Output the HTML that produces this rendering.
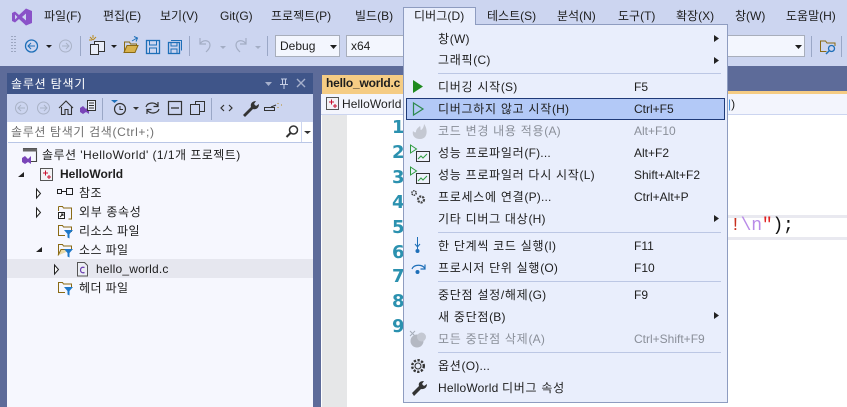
<!DOCTYPE html>
<html><head><meta charset="utf-8">
<style>
html,body{margin:0;padding:0;width:847px;height:407px;overflow:hidden;background:#5d6b99}
*{box-sizing:border-box}
body{font-family:"Liberation Sans","Noto Sans CJK KR",sans-serif;font-size:12px;color:#1e1e1e;position:relative}
.a{position:absolute;white-space:nowrap}
.t{position:absolute;white-space:nowrap;line-height:16px;height:16px}
svg{position:absolute;overflow:visible}
.m{top:8px}
.i{left:438px;letter-spacing:.72px}
.i em{font-style:normal;letter-spacing:.2px}
.k{left:634px}
.g{color:#8a8f99}
.s{position:absolute;left:438px;width:283px;height:1px;background:#bcc7e4}
.n{position:absolute;color:#2b91af;font:bold 18px "DejaVu Sans",sans-serif;line-height:20px;left:392px}
</style></head><body>
<div class="a" style="left:0;top:0;width:847px;height:66px;background:#ccd5f0"></div>

<!-- logo -->
<svg style="left:12px;top:8px" width="20" height="18" viewBox="0 0 20 18"><path d="M0 5 L3 3.5 L7 7 L14 0.5 L20 3 V15 L14 17.5 L7 11 L3 14.5 L0 13Z M3 6.5 V11.5 L5.5 9Z M14 5.5 L10 9 L14 12.5Z" fill="#8a52c8" fill-rule="evenodd"/></svg>

<div class="t m" style="left:44px">파일(F)</div>
<div class="t m" style="left:103px">편집(E)</div>
<div class="t m" style="left:160px">보기(V)</div>
<div class="t m" style="left:220px">Git(G)</div>
<div class="t m" style="left:271px">프로젝트(P)</div>
<div class="t m" style="left:355px">빌드(B)</div>
<div class="t m" style="left:487px">테스트(S)</div>
<div class="t m" style="left:557px">분석(N)</div>
<div class="t m" style="left:618px">도구(T)</div>
<div class="t m" style="left:676px">확장(X)</div>
<div class="t m" style="left:735px">창(W)</div>
<div class="t m" style="left:786px">도움말(H)</div>

<!-- toolbar -->
<svg style="left:0;top:33px" width="330" height="33" fill="none">
 <path d="M12 3v18M15 3v18" stroke="#6c7690" stroke-width="1" stroke-dasharray="1 2"/>
 <circle cx="31.500" cy="13" r="6" stroke="#1e6fb8" stroke-width="1.300"/><path d="M35 13h-7M31 10l-3 3 3 3" stroke="#1e6fb8"/>
 <path d="M46 12h6l-3 3z" fill="#1e1e1e"/>
 <circle cx="65.500" cy="13" r="6" stroke="#a9b2c6"/><path d="M62 13h7M66 10l3 3-3 3" stroke="#a9b2c6"/>
 <path d="M80.500 3v20" stroke="#9aa7c6"/>
 <path d="M90 4l3 3M96 4l-3 3M93 2v3M89 7h3" stroke="#b98a1e"/>
 <rect x="94.500" y="8.500" width="10" height="10" fill="#e9edf8" stroke="#333"/><rect x="90.500" y="11.500" width="8" height="10" fill="#e9edf8" stroke="#333"/>
 <path d="M111 12h6l-3 3z" fill="#1e1e1e"/>
 <path d="M124.500 19v-10h5l1 2h6v2" stroke="#8a6a14"/><path d="M124 19.500l3-7h11l-3 7z" fill="#d8b24e" stroke="#8a6a14"/><path d="M132 8l5-3M134 3.500l3.500 1.500-1.500 3.500" stroke="#1e6fb8"/>
 <rect x="146.500" y="7.500" width="13" height="13" stroke="#1e6fb8" stroke-width="1.300"/><path d="M149.500 8v4h7v-4M149.500 20v-5h7v5" stroke="#1e6fb8"/>
 <rect x="168.500" y="9.500" width="11" height="11" stroke="#1e6fb8" stroke-width="1.300"/><path d="M171 7.500h10.500v10" stroke="#1e6fb8"/><path d="M171 10v3h6v-3M171 20v-4h6v4" stroke="#1e6fb8"/>
 <path d="M189.500 3v20" stroke="#9aa7c6"/>
 <path d="M200 5v6h6M200 11c3-5 10-4 10 1 0 3-2 5-4 7" stroke="#a3adc4" stroke-width="1.200"/>
 <path d="M220 13h6l-3 3z" fill="#a3adc4"/>
 <path d="M246 5v6h-6M246 11c-3-5-10-4-10 1 0 3 2 5 4 7" stroke="#a3adc4" stroke-width="1.200"/>
 <path d="M255 13h6l-3 3z" fill="#a3adc4"/>
 <path d="M267.500 3v20" stroke="#9aa7c6"/>
</svg>
<div class="a" style="left:275px;top:35px;width:65px;height:22px;background:#f3f6fe;border:1px solid #a8aebb;line-height:20px;padding-left:4px">Debug</div>
<svg style="left:330px;top:45px" width="8" height="4"><path d="M0 0h7l-3.500 4z" fill="#1e1e1e"/></svg>
<div class="a" style="left:346px;top:35px;width:60px;height:22px;background:#f3f6fe;border:1px solid #a8aebb;line-height:20px;padding-left:4px">x64</div>
<div class="a" style="left:700px;top:35px;width:105px;height:22px;background:#f3f6fe;border:1px solid #a8aebb"></div>
<svg style="left:795px;top:45px" width="8" height="4"><path d="M0 0h7l-3.500 4z" fill="#1e1e1e"/></svg>
<svg style="left:810px;top:33px" width="37" height="33" fill="none">
 <path d="M1.500 3v21" stroke="#9aa7c6"/>
 <path d="M10.500 19v-11h5l1.500 2h8v3M10.500 18.500h6" stroke="#8a6a14"/><circle cx="21.500" cy="15.500" r="3" stroke="#1e6fb8" stroke-width="1.300"/><path d="M19 18l-3 3" stroke="#1e6fb8" stroke-width="1.500"/>
 <path d="M31.500 3v21" stroke="#9aa7c6"/>
</svg>

<!-- solution explorer -->
<div class="a" style="left:7px;top:73px;width:306px;height:21px;background:#3f5589"></div>
<div class="t" style="left:11px;top:76px;color:#fff;letter-spacing:.8px">솔루션 탐색기</div>
<svg style="left:262px;top:78px" width="50" height="12" fill="none">
 <path d="M3 4h7l-3.500 4z" fill="#a6b0cc"/>
 <path d="M19 1h6M20.500 1v5M23.500 1v5M18 6.500h8M22 7v4" stroke="#c6cfe6"/>
 <path d="M35 1l8 8M43 1l-8 8" stroke="#a6b0cc" stroke-width="1.400"/>
</svg>
<div class="a" style="left:7px;top:94px;width:306px;height:28px;background:#ccd5f0"></div>
<svg style="left:7px;top:94px" width="306" height="28" fill="none">
 <circle cx="14.500" cy="14" r="6" stroke="#a9b2c6"/><path d="M18 14h-7M14 11l-3 3 3 3" stroke="#a9b2c6"/>
 <circle cx="36.500" cy="14" r="6" stroke="#a9b2c6"/><path d="M33 14h7M37 11l3 3-3 3" stroke="#a9b2c6"/>
 <path d="M52 14l7-7 7 7M54.500 13v7.500h3.500v-5h3v5h3.500v-7.500" stroke="#333" stroke-width="1.100"/>
 <path d="M73 14l3-2 3 3 3-3v8l-3-2-3 2-3-2z" fill="#7a45b8"/>
 <rect x="80.500" y="6.500" width="8" height="10" fill="#e9edf8" stroke="#333"/><path d="M82 9h5M82 11.500h5M82 14h5" stroke="#333"/>
 <path d="M95.500 4v22" stroke="#9aa7c6"/>
 <path d="M104 6h7l-3.500 3z" fill="#1e6fb8"/>
 <circle cx="113" cy="15" r="5.500" stroke="#333" stroke-width="1.200"/><path d="M113 12v3.500h3" stroke="#333"/>
 <path d="M126 13h6l-3 3z" fill="#333"/>
 <path d="M139 13c1-4 8-6 12-1M151 8v4.500h-4.500M152 15c-1 4-8 6-12 1M140 20v-4.500h4.500" stroke="#333" stroke-width="1.200"/>
 <rect x="161.500" y="7.500" width="13" height="13" stroke="#333" stroke-width="1.200"/><path d="M164 14h8" stroke="#333" stroke-width="1.300"/>
 <rect x="188.500" y="7.500" width="9" height="10" stroke="#333"/><rect x="183.500" y="10.500" width="9" height="10" fill="#ccd5f0" stroke="#333"/>
 <path d="M204.500 4v22" stroke="#9aa7c6"/>
 <path d="M217 11l-3 3 3 3M222 11l3 3-3 3" stroke="#333" stroke-width="1.200"/>
 <path d="M236 21l8-8c-1-3 1-6 5-6l-2 3 2 2 3-2c0 4-3 6-6 5l-8 8z" fill="#333"/>
 <path d="M257.500 13.500h10v3h-10z" stroke="#333"/><path d="M264 13l5-2" stroke="#333"/><path d="M271 9v1M274 11h1M271 13v1" stroke="#b98a1e"/>
</svg>
<div class="a" style="left:7px;top:122px;width:306px;height:285px;background:#f6f7fe"></div>
<div class="a" style="left:8px;top:122px;width:304px;height:21px;background:#fff;border-bottom:1px solid #b9c6e6"></div>
<div class="t" style="left:11px;top:124px;color:#707070;letter-spacing:.65px">솔루션 탐색기 검색(Ctrl+;)</div>
<svg style="left:284px;top:124px" width="28" height="18" fill="none"><circle cx="9.500" cy="6" r="4" stroke="#333" stroke-width="1.500"/><path d="M6.500 9l-4 4" stroke="#333" stroke-width="2"/><path d="M17.500 -2v20" stroke="#ccd5f0"/><path d="M20 7h7l-3.500 3z" fill="#333"/></svg>

<div class="a" style="left:7px;top:259px;width:306px;height:19px;background:#e6e7ef"></div>
<div class="t" style="left:42px;top:147px;letter-spacing:.45px">솔루션 'HelloWorld' (1/1개 프로젝트)</div>
<div class="t" style="left:60px;top:166px;font-weight:bold">HelloWorld</div>
<div class="t" style="left:79px;top:185px;letter-spacing:.5px">참조</div>
<div class="t" style="left:79px;top:204px;letter-spacing:.65px">외부 종속성</div>
<div class="t" style="left:79px;top:223px;letter-spacing:.4px">리소스 파일</div>
<div class="t" style="left:79px;top:242px;letter-spacing:.4px">소스 파일</div>
<div class="t" style="left:96px;top:261px;letter-spacing:.2px">hello_world.c</div>
<div class="t" style="left:79px;top:280px;letter-spacing:.4px">헤더 파일</div>
<svg style="left:0;top:143px" width="110" height="160" fill="none">
 <path d="M23.500 8.500v-3h13v13h-6" stroke="#444" stroke-width="1.100"/><path d="M23 5.500h14v3h-14z" fill="#666"/>
 <path d="M22 15l3-2 3 3 3-3v8l-3-2-3 2-3-2z" fill="#7a45b8"/>
 <path d="M18 34l6-5v5z" fill="#222"/>
 <rect x="40.500" y="25.500" width="12" height="12" fill="#f3f3f6" stroke="#555"/><path d="M43 30h5M45.500 27.500v5M47 34h4M49 32v4" stroke="#c8102e"/>
 <path d="M36.500 46v9l4-4.500z" stroke="#222" fill="#fff"/>
 <path d="M36.500 65v9l4-4.500z" stroke="#222" fill="#fff"/>
 <path d="M36 109l6-5v5z" fill="#222"/>
 <path d="M54.500 122v9l4-4.500z" stroke="#222" fill="#fff"/>
 <rect x="57.500" y="46.500" width="4" height="4" stroke="#222"/><rect x="66.500" y="45.500" width="6" height="6" stroke="#222"/><path d="M62 48.500h4.500" stroke="#222"/>
 <path d="M62 63.500h-3.500v-0h4l1 1.500h8v11h-3" stroke="#8a6a14"/><path d="M58.500 68v-4.500" stroke="#8a6a14"/><rect x="58.500" y="69.500" width="6" height="6" fill="#fff" stroke="#222"/><path d="M60 74l3-3M61 71h2v2" stroke="#222"/>
 <path d="M58.500 93v-10.500h4l1 1.500h8v5" stroke="#8a6a14"/><path d="M58 92.500h7" stroke="#8a6a14"/><path d="M64 87h9l-3.500 4v4.500l-2-1V91z" fill="#1e78c8"/>
 <path d="M58.500 112v-10.500h4l1 1.500h8v3" stroke="#8a6a14"/><path d="M58 112.500l3-6h11" stroke="#8a6a14" fill="#e8d9a8"/><path d="M64 106h9l-3.500 4v4.500l-2-1V110z" fill="#1e78c8"/>
 <path d="M58.500 150v-10.500h4l1 1.500h8v3" stroke="#8a6a14"/><path d="M58 149.500h7" stroke="#8a6a14"/><path d="M64 144h9l-3.500 4v4.500l-2-1V148z" fill="#1e78c8"/>
 <path d="M77.500 119.500h7l3 3v10.500h-10z" fill="#eceef4" stroke="#555"/><path d="M84.500 124.500c-3-1-4 1-4 2.500s1 3.500 4 2.500" stroke="#6b3fb0" stroke-width="1.200"/>
</svg>

<!-- document -->
<div class="a" style="left:322px;top:75px;width:82px;height:17px;background:#f5cc84;color:#1e1e1e;font-weight:bold;line-height:16px;padding-left:4px;letter-spacing:-.2px">hello_world.c</div>
<div class="a" style="left:322px;top:91px;width:525px;height:3px;background:#f5cc84"></div>
<div class="a" style="left:321px;top:94px;width:526px;height:21px;background:#f3f5fd;border-bottom:1px solid #ccd5f0"></div>
<div class="a" style="left:321px;top:115px;width:526px;height:292px;background:#fff"></div>
<div class="a" style="left:322px;top:115px;width:25px;height:292px;background:#e6e7e8"></div>
<svg style="left:326px;top:97px" width="14" height="14" fill="none"><rect x=".5" y=".5" width="12" height="12" fill="#f3f3f6" stroke="#555"/><path d="M3 5h5M5.500 2.500v5M7 9h4M9 7v4" stroke="#c8102e"/></svg>
<div class="t" style="left:342px;top:96px;letter-spacing:.1px">HelloWorld</div>
<div class="n" style="top:118px">1</div>
<div class="n" style="top:143px">2</div>
<div class="n" style="top:168px">3</div>
<div class="n" style="top:193px">4</div>
<div class="n" style="top:218px">5</div>
<div class="n" style="top:243px">6</div>
<div class="n" style="top:267px">7</div>
<div class="n" style="top:292px">8</div>
<div class="n" style="top:317px">9</div>

<div class="a" style="left:728px;top:94px;color:#1e1e1e;line-height:20px"><span style="color:#3c8bd8">|</span>)</div>
<div class="a" style="left:728px;top:215px;width:119px;height:3px;background:#e9e9f0"></div>
<div class="a" style="left:728px;top:237px;width:119px;height:3px;background:#e9e9f0"></div>
<div class="a" style="left:730px;top:216px;font:18px/20px 'Liberation Mono',monospace;letter-spacing:-.2px"><span style="color:#c8301e">!</span><span style="color:#b98be8">\n</span><span style="color:#e02020">"</span><span style="color:#111">);</span></div>

<!-- debug menu -->
<div class="a" style="left:403px;top:7px;width:73px;height:18px;background:#e9eefc;border:1px solid #8e9cc0;border-bottom:0;z-index:3"></div>
<div class="a" style="left:403px;top:24px;width:325px;height:379px;background:#e9eefc;border:1px solid #8e9cc0;z-index:2"></div>
<div style="position:absolute;left:0;top:0;z-index:4;width:847px;height:407px">
<div class="t" style="left:414px;top:8px;letter-spacing:.1px">디버그(D)</div>
<div class="a" style="left:406px;top:98px;width:319px;height:22px;background:#b3c9f7;border:1px solid #1f3a78"></div>
<div class="s" style="top:73px"></div><div class="s" style="top:232px"></div><div class="s" style="top:281px"></div><div class="s" style="top:352px"></div>

<div class="t i" style="top:31px">창<em>(W)</em></div>
<div class="t i" style="top:52px">그래픽<em>(C)</em></div>
<div class="t i" style="top:79px">디버깅 시작<em>(S)</em></div><div class="t k" style="top:79px">F5</div>
<div class="t i" style="top:101px">디버그하지 않고 시작<em>(H)</em></div><div class="t k" style="top:101px">Ctrl+F5</div>
<div class="t i g" style="top:123px">코드 변경 내용 적용<em>(A)</em></div><div class="t k g" style="top:123px">Alt+F10</div>
<div class="t i" style="top:145px">성능 프로파일러<em>(F)...</em></div><div class="t k" style="top:145px">Alt+F2</div>
<div class="t i" style="top:167px">성능 프로파일러 다시 시작<em>(L)</em></div><div class="t k" style="top:167px">Shift+Alt+F2</div>
<div class="t i" style="top:189px">프로세스에 연결<em>(P)...</em></div><div class="t k" style="top:189px">Ctrl+Alt+P</div>
<div class="t i" style="top:211px">기타 디버그 대상<em>(H)</em></div>
<div class="t i" style="top:238px">한 단계씩 코드 실행<em>(I)</em></div><div class="t k" style="top:238px">F11</div>
<div class="t i" style="top:260px">프로시저 단위 실행<em>(O)</em></div><div class="t k" style="top:260px">F10</div>
<div class="t i" style="top:287px">중단점 설정/해제<em>(G)</em></div><div class="t k" style="top:287px">F9</div>
<div class="t i" style="top:309px">새 중단점<em>(B)</em></div>
<div class="t i g" style="top:331px">모든 중단점 삭제<em>(A)</em></div><div class="t k g" style="top:331px">Ctrl+Shift+F9</div>
<div class="t i" style="top:358px">옵션<em>(O)...</em></div>
<div class="t i" style="top:380px"><em>HelloWorld </em>디버그 속성</div>

<svg style="left:403px;top:24px" width="325" height="379" fill="none">
 <path d="M311 11l5 3.500-5 3.500zM311 33l5 3.500-5 3.500zM311 191l5 3.500-5 3.500zM311 288l5 3.500-5 3.500z" fill="#222"/>
 <path d="M10 56v13l10-6.500z" fill="#1f8a1f"/>
 <path d="M10.500 79v12l9.500-6z" stroke="#2e8a4e" stroke-width="1.200" fill="none"/>
 <path d="M17 102c1 2 0 4 1 4 2-1 3-4 3-6 4 5 4 15-4 15-6 0-8-4-7-8 1 1 2 2 3 1 0-3 2-4 4-6z" fill="#c4c8d2"/>
 <rect x="13.500" y="127.500" width="13" height="10" fill="#eef1fb" stroke="#333"/><path d="M15 135l3-3 2 2 4-4" stroke="#2e9a3e"/><path d="M7.500 121v8l6-4z" fill="#e9eefc" stroke="#2e9a3e"/>
 <rect x="13.500" y="149.500" width="13" height="10" fill="#eef1fb" stroke="#333"/><path d="M15 157l3-3 2 2 4-4" stroke="#2e9a3e"/><path d="M7.500 143v8l6-4z" fill="#e9eefc" stroke="#2e9a3e"/>
 <circle cx="11" cy="169" r="2.200" stroke="#333" stroke-width="1.400" stroke-dasharray="1.500 .8"/>
 <circle cx="18" cy="175.500" r="3" stroke="#444" stroke-width="2.200" stroke-dasharray="2 1"/>
 <path d="M14.500 213v12" stroke="#1e6fb8"/><path d="M12 220l2.500 3 2.500-3" stroke="#1e6fb8"/><circle cx="14.500" cy="227" r="2" fill="#1e6fb8"/>
 <path d="M9 245c2-5 11-5 13 0M22 240.500v4.500h-4.500" stroke="#1e6fb8" stroke-width="1.200"/><circle cx="14.500" cy="248" r="2" fill="#1e6fb8"/>
 <path d="M7 307l5 5M12 307l-5 5" stroke="#a6acb8"/><circle cx="14" cy="317" r="6.500" fill="#b4b8c2"/><circle cx="18.500" cy="313" r="4.500" fill="#c4c8d2"/>
 <circle cx="15" cy="342" r="3" stroke="#333" stroke-width="1.100"/><circle cx="15" cy="342" r="5.800" stroke="#333" stroke-width="2.400" stroke-dasharray="2.300 1.500"/>
 <path d="M9 369l7-7c-1-3 1-5 5-5l-2 3 2 2 3-2c0 4-3 5.500-6 5l-7 7z" fill="#333"/>
</svg>
</div>
</body></html>
